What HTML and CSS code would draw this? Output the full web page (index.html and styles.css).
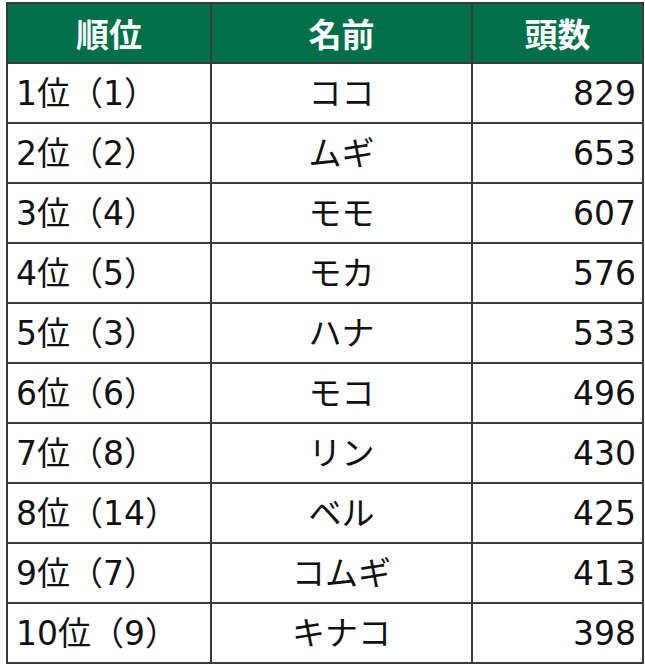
FILE: index.html
```html
<!DOCTYPE html>
<html lang="ja">
<head>
<meta charset="utf-8">
<link rel="stylesheet" href="styles.css">
</head>
<body>
<table class="rank">
<thead>
<tr><th class="c1">順位</th><th class="c2">名前</th><th class="c3">頭数</th></tr>
</thead>
<tbody>
<tr><td class="pos">1位（1）</td><td class="name">ココ</td><td class="num">829</td></tr>
<tr><td class="pos">2位（2）</td><td class="name">ムギ</td><td class="num">653</td></tr>
<tr><td class="pos">3位（4）</td><td class="name">モモ</td><td class="num">607</td></tr>
<tr><td class="pos">4位（5）</td><td class="name">モカ</td><td class="num">576</td></tr>
<tr><td class="pos">5位（3）</td><td class="name">ハナ</td><td class="num">533</td></tr>
<tr><td class="pos">6位（6）</td><td class="name">モコ</td><td class="num">496</td></tr>
<tr><td class="pos">7位（8）</td><td class="name">リン</td><td class="num">430</td></tr>
<tr><td class="pos">8位（14）</td><td class="name">ベル</td><td class="num">425</td></tr>
<tr><td class="pos">9位（7）</td><td class="name">コムギ</td><td class="num">413</td></tr>
<tr><td class="pos">10位（9）</td><td class="name">キナコ</td><td class="num">398</td></tr>
</tbody>
</table>
</body>
</html>
```
FILE: styles.css
```css
html, body {
  margin: 0;
  padding: 0;
  background: #ffffff;
}
body {
  padding: 2px 0 0 6px;
  font-family: "DejaVu Sans", "Noto Sans CJK JP", sans-serif;
}
.rank {
  border-collapse: collapse;
  table-layout: fixed;
  width: 636px;
}
.rank th, .rank td {
  border: 2px solid #3a3a3a;
  height: 58px;
  padding: 0;
  line-height: 1;
}
.rank th {
  background: #00704a;
  color: #ffffff;
  font-family: "Noto Sans CJK JP", sans-serif;
  font-weight: 700;
  font-size: 33px;
  text-align: center;
}
.c1 { width: 202px; }
.c2 { width: 259px; }
.c3 { width: 169px; }
.rank td {
  font-size: 33px;
  color: #111111;
}
.pos {
  text-align: left;
  padding-left: 8px !important;
}
.name {
  text-align: center;
}
.num {
  text-align: right;
  padding-right: 6px !important;
}
```
